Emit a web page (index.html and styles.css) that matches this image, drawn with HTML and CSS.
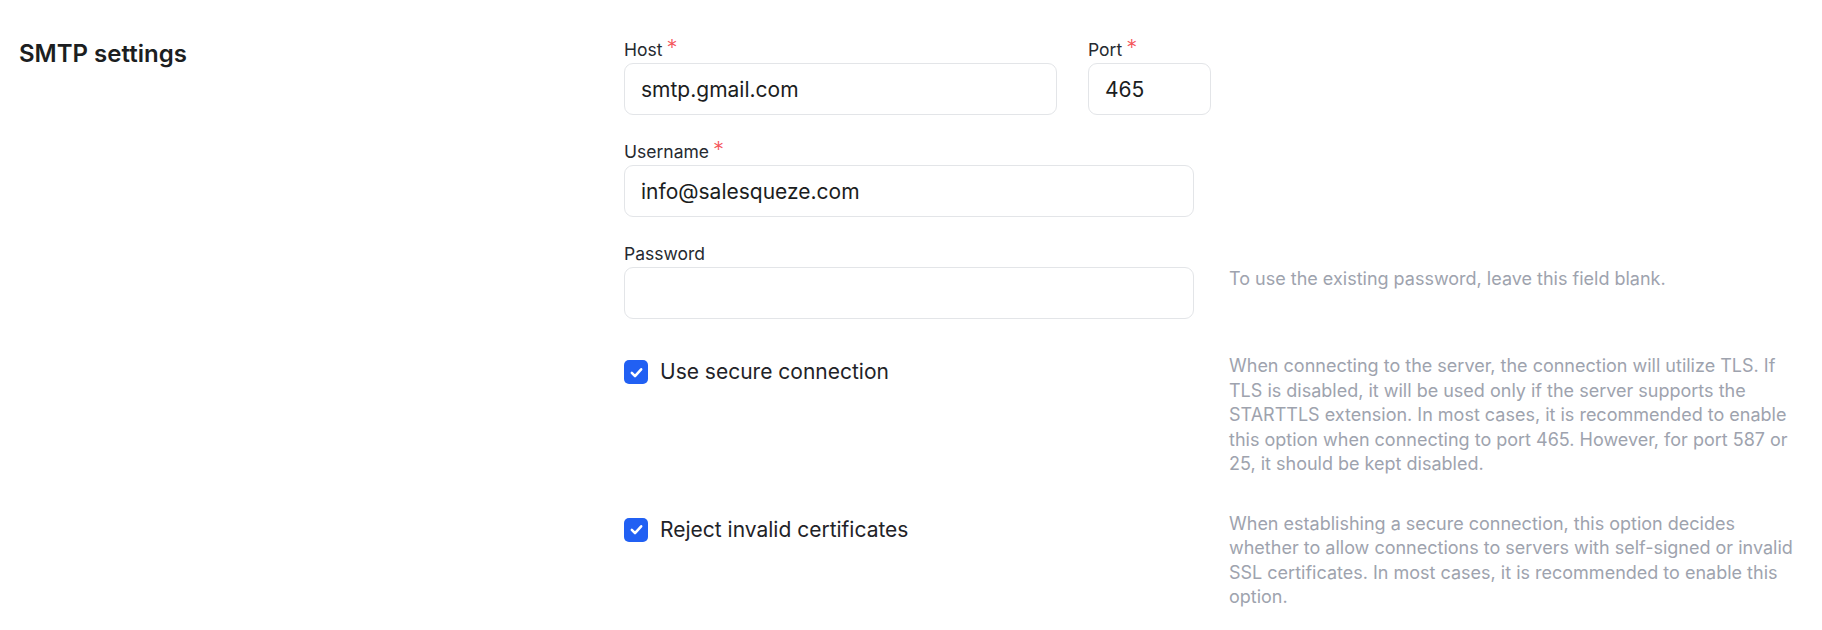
FILE: index.html
```html
<!DOCTYPE html>
<html lang="en">
<head>
    <meta charset="UTF-8">
    <meta name="viewport" content="width=device-width, initial-scale=1.0">
    <title>SMTP settings</title>
    <link rel="stylesheet" href="styles.css">
</head>
<body>
    <div class="page">
        <h2 class="section-title">SMTP settings</h2>

        <div class="form">
            <!-- Host + port -->
            <div class="pair">
                <div class="field host">
                    <label for="host">Host<span class="req">*</span></label>
                    <input type="text" id="host" value="smtp.gmail.com">
                </div>
                <div class="field port">
                    <label for="port">Port<span class="req">*</span></label>
                    <input type="text" id="port" value="465">
                </div>
            </div>

            <div class="row">
                <div class="field">
                    <label for="username">Username<span class="req">*</span></label>
                    <input type="text" id="username" value="info@salesqueze.com">
                </div>
            </div>

            <div class="row">
                <div class="field">
                    <label for="password">Password</label>
                    <input type="password" id="password">
                </div>
                <p class="help help-input">To use the existing password, leave this field blank.</p>
            </div>

            <div class="row check-row">
                <label class="check">
                    <input type="checkbox" checked>
                    <span class="box">
                        <svg viewBox="0 0 16 16" width="17" height="17"><path d="M3.6 8.4l3 3 5.8-6.4" fill="none" stroke="#fff" stroke-width="2.4" stroke-linecap="round" stroke-linejoin="round"/></svg>
                    </span>
                    Use secure connection
                </label>
                <p class="help">When connecting to the server, the connection will utilize TLS. If TLS is disabled, it will be used only if the server supports the STARTTLS extension. In most cases, it is recommended to enable this option when connecting to port 465. However, for port 587 or 25, it should be kept disabled.</p>
            </div>

            <div class="row check-row">
                <label class="check">
                    <input type="checkbox" checked>
                    <span class="box">
                        <svg viewBox="0 0 16 16" width="17" height="17"><path d="M3.6 8.4l3 3 5.8-6.4" fill="none" stroke="#fff" stroke-width="2.4" stroke-linecap="round" stroke-linejoin="round"/></svg>
                    </span>
                    Reject invalid certificates
                </label>
                <p class="help">When establishing a secure connection, this option decides whether to allow connections to servers with self-signed or invalid SSL certificates. In most cases, it is recommended to enable this option.</p>
            </div>
        </div>
    </div>
</body>
</html>
```

FILE: styles.css
```css
body {
    margin: 0;
    font-family: Inter, 'Noto Sans', sans-serif;
    color: #1f2328;
    background: #fff;
}
.page {
    display: flex;
    padding: 39px 19px 0;
}
.section-title {
    flex: none;
    width: 605px;
    margin: 0;
    font-size: 24px;
    line-height: 30px;
    font-weight: 600;
    color: #1c1e21;
}
.form {
    flex: 1;
    display: flex;
    flex-direction: column;
    gap: 26px;
}
.pair {
    display: flex;
    gap: 31px;
}
.row {
    display: grid;
    grid-template-columns: 570px 1fr;
    column-gap: 35px;
}
.field {
    display: flex;
    flex-direction: column;
    gap: 2px;
}
.field.host {
    width: 433px;
}
.field.port {
    width: 123px;
}
.field label {
    font-size: 17.5px;
    line-height: 22px;
    color: #262a30;
}
.req {
    color: #f4555a;
    font-size: 22px;
    font-weight: 300;
    line-height: 14px;
    margin-left: 4px;
    vertical-align: top;
    position: relative;
    top: 1px;
}
.field input {
    height: 52px;
    box-sizing: border-box;
    padding: 0 16px;
    border: 1px solid #e3e5e8;
    border-radius: 9px;
    font-family: inherit;
    font-size: 21px;
    color: #1b1d21;
    background: #fff;
    outline: none;
}
.help {
    margin: 0;
    font-size: 18px;
    line-height: 24.5px;
    color: #9ea3ae;
}
.help-input {
    padding-top: 24px;
}
.check-row {
    padding-top: 9px;
}
.check {
    display: flex;
    align-items: center;
    gap: 12px;
    padding-top: 6px;
    height: 24px;
    font-size: 21px;
    line-height: 24px;
    color: #1f2328;
}
.check input {
    display: none;
}
.box {
    width: 24px;
    height: 24px;
    border-radius: 5px;
    background: #2160f3;
    display: flex;
    align-items: center;
    justify-content: center;
}
```
